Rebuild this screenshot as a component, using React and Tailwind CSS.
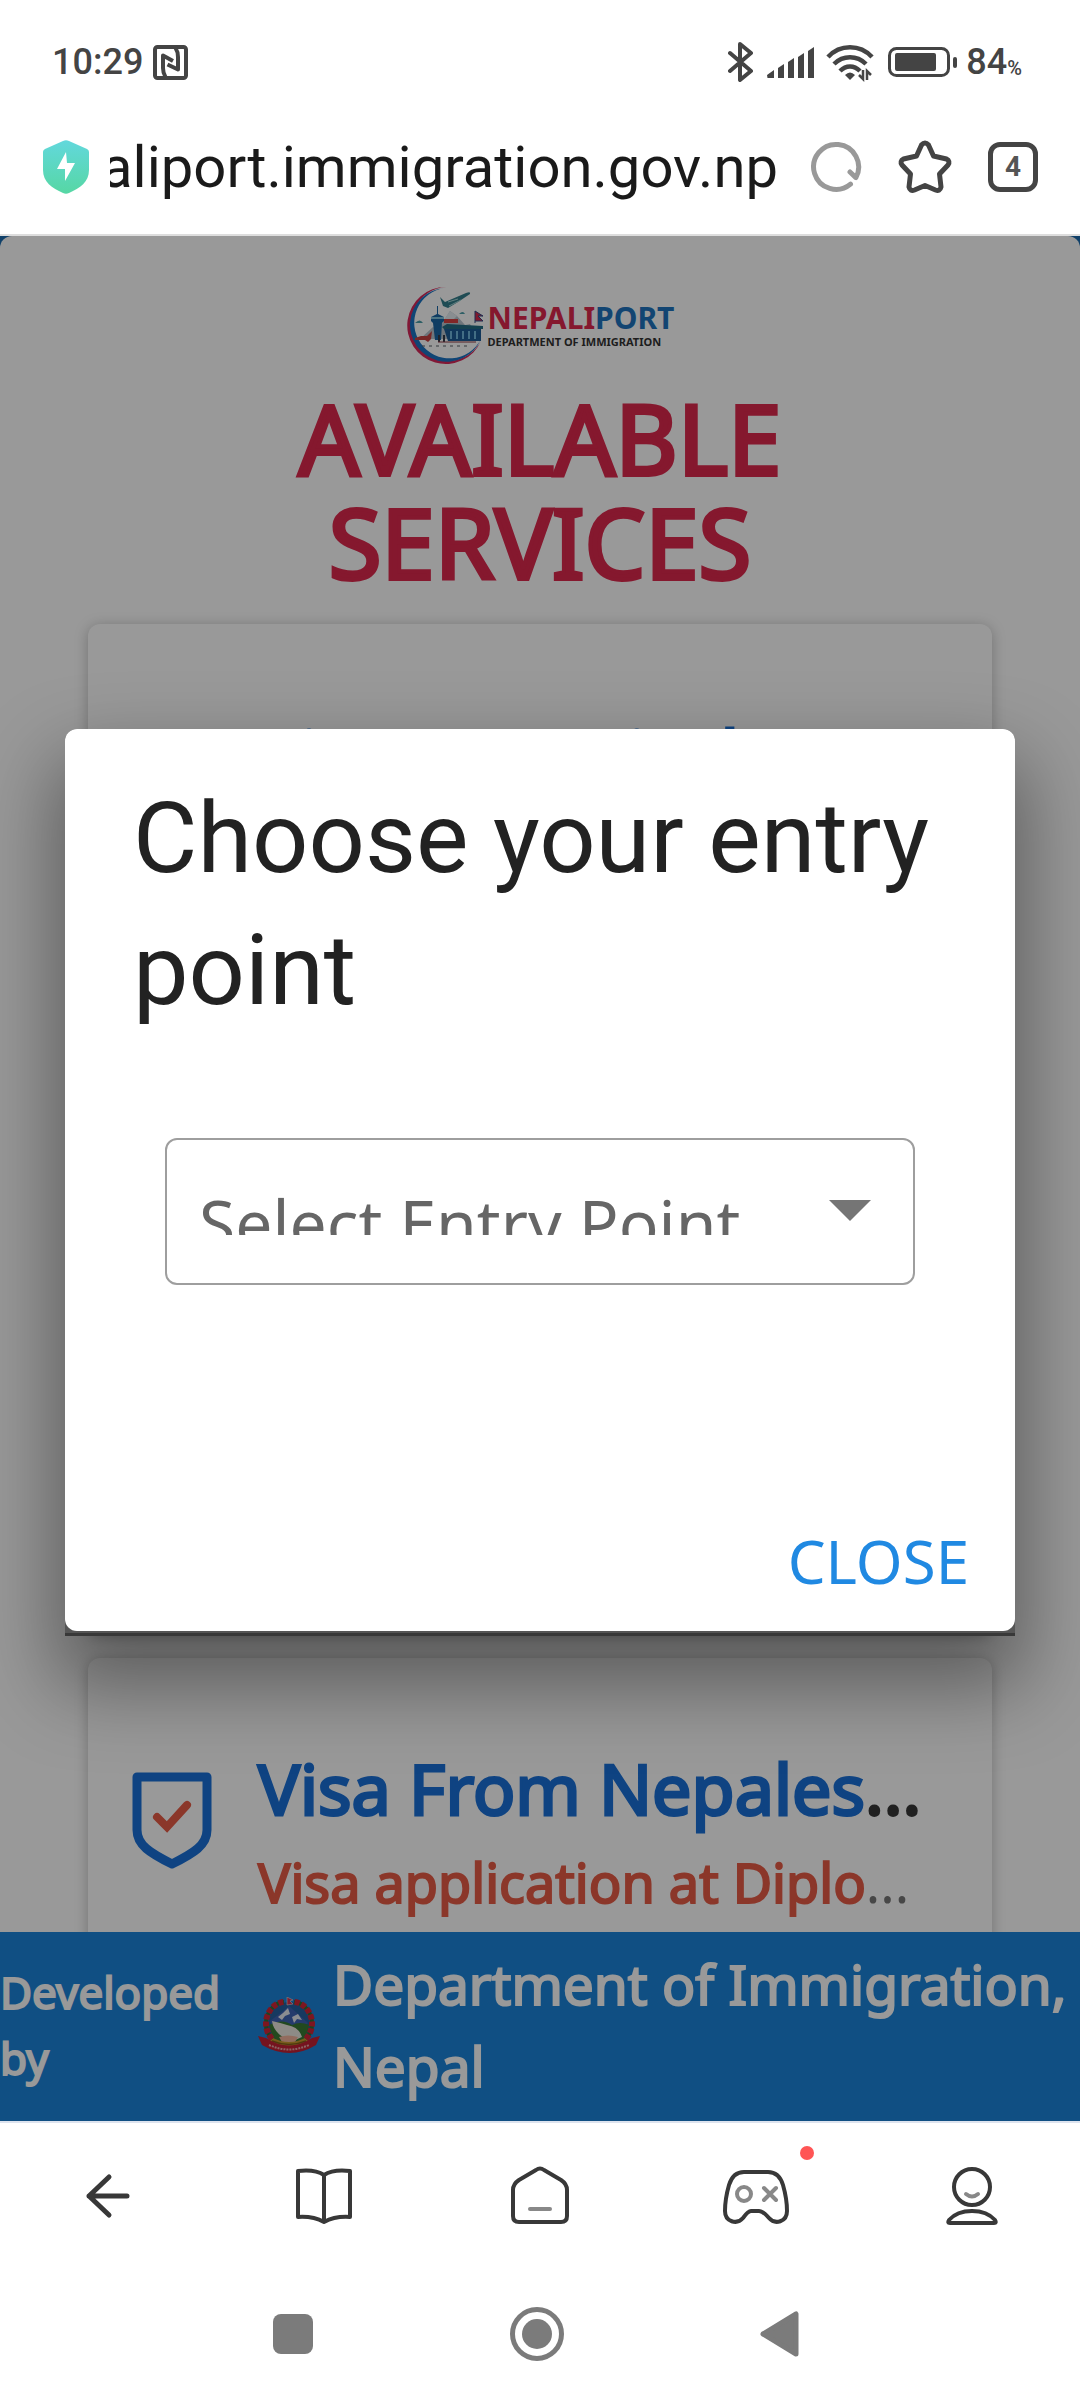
import { useState } from 'react';

const SERVICES = [
  { title: 'Visa On Arrival', subtitle: '', size: 'min-h-[1010px]' },
  { title: 'Visa From Nepales', subtitle: 'Visa application at Diplo', size: 'min-h-80' },
];

function StatusBar() {
  return (
    <div className="flex h-[124px] items-center justify-between pr-[58px] pl-[52px] font-['Roboto','Noto_Sans',sans-serif] text-4xl font-medium text-[#444]">
      <div className="flex items-center gap-2.5">
        <span>10:29</span>
        <svg className="h-[35px] w-[35px]" viewBox="0 0 35 35" fill="none" stroke="#444">
          <rect x="2" y="2" width="31" height="31" rx="2.5" strokeWidth="4" />
          <path d="M12.500 32c-2-3-2.500-6-2.500-9V10.500L20 16" strokeWidth="4" strokeLinejoin="round" />
          <path d="M22.500 3c2 3 2.500 6 2.500 9v12.500L14.500 19.500" strokeWidth="4" strokeLinejoin="round" />
        </svg>
      </div>
      <div className="flex items-center">
        <svg className="h-10 w-[230px]" viewBox="0 0 230 40" fill="none" stroke="#444">
          <path d="M2 11l21 18-11 9V2l11 9L2 29" strokeWidth="4" strokeLinejoin="round" strokeLinecap="round" />
          <g fill="#444" stroke="none">
            <path d="M39 33l7-5v8h-6.500zM50 26l6-4v14h-6zM60 20l6-4v20h-6zM70 15l6-4v25h-6zM80 9l6-4v31h-6z" />
          </g>
          <g strokeWidth="4.500">
            <path d="M100 15c12-13 32-13 44 0" />
            <path d="M106 22c9-9 23-9 32 0" />
            <path d="M112 29c6-6 14-6 20 0" />
          </g>
          <path d="M117 33q5-5 10 0l-5 5z" fill="#444" stroke="none" />
          <path d="M135 28v9l-4-4M139 38v-9l4 4" strokeWidth="2.500" />
          <rect x="161.500" y="6.500" width="59" height="27" rx="7" strokeWidth="3" />
          <rect x="167" y="11" width="41" height="18" rx="2" fill="#444" stroke="none" />
          <rect x="225" y="15" width="4" height="11" rx="2" fill="#444" stroke="none" />
        </svg>
        <span className="pl-2">84</span>
        <span className="self-end text-xl">%</span>
      </div>
    </div>
  );
}

function AddressBar() {
  return (
    <div className="flex h-[112px] items-center border-b-2 border-[#ddd] px-[42px] pb-6">
      <svg className="h-[54px] w-[48px] shrink-0" viewBox="0 0 48 54">
        <defs>
          <linearGradient id="guard" x1="0" y1="0" x2="0" y2="1">
            <stop offset="0" stopColor="#62d8dc" />
            <stop offset="1" stopColor="#56d7a4" />
          </linearGradient>
        </defs>
        <path d="M21 1q3-1.500 6 0l18 8q2 1 2 3v18c0 12-9 18-20 23q-3 1.500-6 0C10 48 1 42 1 30V12q0-2 2-3z" fill="url(#guard)" />
        <path d="M24 12L15 29h8v12l10-18h-8z" fill="#fff" />
      </svg>
      <div className="ml-5 flex min-w-0 flex-1 justify-end overflow-hidden">
        <span className="whitespace-nowrap font-['Roboto','Noto_Sans',sans-serif] text-[58px] leading-[72px] text-[#1a1a1a]">
          nepaliport.immigration.gov.np
        </span>
      </div>
      <div className="ml-8 flex shrink-0 items-center gap-9">
        <button aria-label="Reload">
          <svg className="h-[52px] w-[52px]" viewBox="0 0 52 52" fill="none" stroke="#999" strokeWidth="5" strokeLinecap="round" strokeLinejoin="round">
            <path d="M40.500 43.200A22.500 22.500 0 1 1 45.900 36.600L40 31" />
          </svg>
        </button>
        <button aria-label="Bookmark">
          <svg className="h-[54px] w-[54px]" viewBox="0 0 54 54" fill="none" stroke="#444" strokeWidth="5" strokeLinejoin="round">
            <path d="M23.500 5q3.500-4 7 0l5 11 13 3q4 2 1.500 6l-8.500 9 1.500 13q-1 4.500-5.500 3L27 45.500 16.500 50q-4.500 1.500-5.500-3l1.500-13L4 25q-2.500-4 1.500-6l13-3z" />
          </svg>
        </button>
        <button
          aria-label="Tabs"
          className="flex h-[50px] w-[50px] items-center justify-center rounded-xl border-[5px] border-[#444] font-['Roboto','Noto_Sans',sans-serif] text-[28px] font-bold text-[#555]"
        >
          4
        </button>
      </div>
    </div>
  );
}

function PortLogo() {
  return (
    <div className="flex items-center justify-center gap-1">
      <svg className="h-[78px] w-[78px]" viewBox="0 0 78 78">
        <path d="M40 0A38.500 38.500 0 1 0 75 54A36.900 36.900 0 1 1 40 0z" fill="#d8285a" />
        <path d="M39 1A36.900 36.900 0 1 0 75 52A35.300 35.300 0 1 1 39 1z" fill="#1b74c4" />
        <path d="M14 52l13-12 5 3 12-19 7 5 8 9 5-1 8 15z" fill="#b7c3cd" />
        <path d="M38 33l6-9 7 5-5 5z" fill="#e4ebf0" />
        <path d="M37 19l-3-9 5 5 21-9q5-2 4 1L52 15l-10 6z" fill="#357f8c" />
        <path d="M42 15l10-3M43 19l12-6" stroke="#a7d6d8" strokeWidth="1" />
        <path d="M25 30v4l2 2 2 17h6l1-17 2-2v-4l-6-3v-8h-1v8z" fill="#1c67a5" />
        <path d="M25 31h13" stroke="#83c4dd" strokeWidth="2" />
        <rect x="38" y="32" width="14" height="4" fill="#d84242" />
        <path d="M36 40l5-3 36 2v3H38z" fill="#246d84" />
        <path d="M38 42h37v12H42z" fill="#1d5d97" />
        <path d="M45 44v8M51 44v8M57 44v8M63 44v8M69 44v8" stroke="#71b8dd" strokeWidth="2" />
        <path d="M9 51l6-2h6l5-5-1 8-3 3-3-2H9z" fill="#c94141" />
        <path d="M33 48v7M38 48v7" stroke="#333d4c" strokeWidth="2" />
        <path d="M32 55h38" stroke="#8d3a45" />
        <path d="M16 59h46" stroke="#596066" strokeDasharray="3 4" />
        <path d="M69 24v12M69 24l8 5h-5l5 5h-8" fill="#d42b4d" stroke="#344a85" strokeWidth="1" />
        <path d="M9 36q5-5 8 0zM53 27q4-4 6 0z" fill="#4e9eaa" />
      </svg>
      <div className="font-['Noto_Sans',sans-serif] font-bold">
        <div className="text-[30px] leading-8">
          <span className="text-[#de284d]">NEPALI</span>
          <span className="text-[#1f73be]">PORT</span>
        </div>
        <div className="text-[11px] leading-4 text-[#333]">DEPARTMENT OF IMMIGRATION</div>
      </div>
    </div>
  );
}

function ServiceCard({ title, subtitle, size }) {
  return (
    <article className={`flex gap-[46px] rounded-xl bg-white px-11 pt-[84px] shadow-[0_2px_14px_rgba(0,0,0,0.25)] ${size}`}>
      <svg className="mt-[30px] h-[98px] w-[80px] shrink-0" viewBox="0 0 80 98" fill="none">
        <path d="M5 5h70v53c0 15-13 23-35 34C18 81 5 73 5 58z" stroke="#1971d9" strokeWidth="9" strokeLinejoin="round" />
        <path d="M25 45l10 10 20-22" stroke="#e85c46" strokeWidth="8" strokeLinecap="round" />
      </svg>
      <div className="min-w-0 whitespace-nowrap font-['Noto_Sans',sans-serif]">
        <h2 className="text-[70px] leading-[92px] text-[#383838] [-webkit-text-stroke:3px]">
          <span className="text-[#1971d9] [-webkit-text-stroke:3px_#1971d9]">{title}</span>
          {subtitle && '...'}
        </h2>
        {subtitle && (
          <p className="text-[54px] leading-[96px] text-[#777]">
            <span className="text-[#e85c46] [-webkit-text-stroke:2px_#e85c46]">{subtitle}</span>...
          </p>
        )}
      </div>
    </article>
  );
}

function Emblem() {
  return (
    <svg className="h-[56px] w-[64px] shrink-0" viewBox="0 0 64 56">
      <ellipse cx="32" cy="28" rx="21" ry="23" fill="#2560a0" />
      <path d="M13 24L25 15l7-6 8 7 11 10-8 8H18z" fill="#3e63b5" />
      <path d="M21 20l5-4 5-5 2 6-5 2-3 4zM35 20l6-3 4 6-5-1-3 4z" fill="#e6e9f2" />
      <path d="M12 28q14-7 23 0 8-4 17 0l-3 16H17z" fill="#3a7a35" />
      <path d="M15 24q9 2 15 4 12 2 15 12l-9 4q-8-2-13-6-7-6-8-14z" fill="#ece8df" />
      <path d="M22 40q9-3 19 0l-3 5H25z" fill="#f3b59d" />
      <path d="M14 40q18 10 36 0l2 9q-20 8-40 0z" fill="#c9982d" />
      <path d="M15 44q17 7 34 0" stroke="#83601a" strokeWidth="1.500" fill="none" />
      <path d="M15 42C2 27 12 6 27 5M49 42C62 27 52 6 37 5" stroke="#2f7036" strokeWidth="4" fill="none" />
      <path d="M15 42C2 27 12 6 27 5M49 42C62 27 52 6 37 5" stroke="#d12638" strokeWidth="6" strokeDasharray="5 2" fill="none" />
      <path d="M30 8V0l6 3-3 1 3 3z" fill="#d83050" stroke="#ddd" strokeWidth=".6" />
      <path d="M1 39l8 2q23 15 46 0l8-2-4 9q-26 16-54 0z" fill="#c32034" />
      <path d="M12 48q20 9 40 0" stroke="#e9a7a7" strokeWidth="2" strokeDasharray="2 1" fill="none" />
    </svg>
  );
}

function PageFooter() {
  return (
    <footer className="flex h-[189px] items-center bg-[#1b84da] pb-1 font-['Noto_Sans',sans-serif] text-white [-webkit-text-stroke:2px_white]">
      <span className="w-[257px] shrink-0 text-[44px] leading-[66px]">Developed<br />by</span>
      <Emblem />
      <span className="pl-3 text-[55px] leading-[82px]">Department of Immigration, Nepal</span>
    </footer>
  );
}

function EntryDialog({ onClose }) {
  return (
    <div className="absolute inset-0 flex items-center justify-center bg-black/40 px-[65px] pt-2">
      <div className="w-full rounded-t-xl border-b-[3px] border-[#383838] bg-[#555] pb-[2px] shadow-[0_40px_80px_10px_rgba(0,0,0,0.4)]">
        <div role="dialog" aria-labelledby="entry-title" className="flex h-[902px] flex-col rounded-xl bg-white">
          <h2 id="entry-title" className="px-[68px] pt-[43px] font-['Roboto','Noto_Sans',sans-serif] text-[99px] leading-[132px] text-[#222]">
            Choose your entry point
          </h2>
          <div className="relative mx-[100px] mt-[102px]">
            <select
              aria-label="Select Entry Point"
              className="block h-[147px] w-full appearance-none rounded-xl border-2 border-[#9e9e9e] bg-white text-transparent"
            />
            <div className="pointer-events-none absolute inset-0 flex items-start justify-between pr-11 pl-[34px]">
              <span className="mt-12 h-[49px] overflow-hidden font-['Noto_Sans',sans-serif] text-[66px] leading-[72px] text-[#666]">
                Select Entry Point
              </span>
              <svg className="mt-[62px] h-[21px] w-[42px]" viewBox="0 0 42 21">
                <path d="M0 0h42L21 21z" fill="#757575" />
              </svg>
            </div>
          </div>
          <div className="mt-auto flex justify-end px-[46px] pb-7">
            <button onClick={onClose} className="font-['Noto_Sans',sans-serif] text-[60px] leading-[84px] text-[#2089e2]">
              CLOSE
            </button>
          </div>
        </div>
      </div>
    </div>
  );
}

function BrowserNav() {
  const line = { fill: 'none', stroke: '#383838', strokeWidth: 4, strokeLinecap: 'round', strokeLinejoin: 'round' };
  return (
    <nav className="grid h-[148px] grid-cols-5 place-items-center border-t-2 border-[#dde3ee] font-sans">
      <button aria-label="Back">
        <svg className="h-16 w-16" viewBox="0 0 64 64" {...line} strokeWidth="5">
          <path d="M51 32H13M33 13L13 32l20 19" />
        </svg>
      </button>
      <button aria-label="Reading">
        <svg className="h-16 w-16" viewBox="0 0 64 64" {...line}>
          <path d="M32 11q-9-6-26-4v46q15-1 26 5zM32 11q9-6 26-4v46q-15-1-26 5z" />
        </svg>
      </button>
      <button aria-label="Home">
        <svg className="h-16 w-16" viewBox="0 0 64 64" {...line}>
          <path d="M28 6q4-3 8 0l17 10q6 4 6 10v26q0 6-6 6H11q-6 0-6-6V26q0-6 6-10z" />
          <path d="M22 45h20" stroke="#888" />
        </svg>
      </button>
      <button aria-label="Games" className="relative">
        <svg className="h-16 w-[68px]" viewBox="0 0 68 64" {...line}>
          <path d="M22 8h24q11 0 15 13 4 14 4 26c0 11-12 14-18 7q-6-7-10-7H29q-3 0-8 7C15 61 3 58 3 47q0-12 4-26Q11 8 22 8z" />
          <g stroke="#888" strokeWidth="4">
            <circle cx="22" cy="30" r="7" />
            <path d="M42 24l12 12M54 24L42 36" />
          </g>
        </svg>
        <span className="absolute -top-[18px] -right-6 h-3.5 w-3.5 rounded-full bg-[#ff5555]" />
      </button>
      <button aria-label="Profile">
        <svg className="h-16 w-16" viewBox="0 0 64 64" {...line}>
          <circle cx="32" cy="23" r="18" />
          <path d="M26 30q6 5 12 0" stroke="#888" />
          <path d="M10 59h44q3 0 1-3-8-9-23-9T9 56q-2 3 1 3z" />
        </svg>
      </button>
    </nav>
  );
}

function SystemNav() {
  return (
    <nav className="flex h-[131px] items-center justify-between pr-[280px] pb-0.5 pl-[273px]">
      <button aria-label="Recent apps" className="h-10 w-10 rounded-lg bg-[#7b7b7b]" />
      <button aria-label="Home screen" className="flex h-[54px] w-[54px] items-center justify-center rounded-full border-[5px] border-[#7b7b7b]">
        <span className="h-[30px] w-[30px] rounded-full bg-[#7b7b7b]" />
      </button>
      <button aria-label="System back">
        <svg className="h-[46px] w-10" viewBox="0 0 40 46">
          <path d="M36 3v40L3 23z" fill="#7b7b7b" stroke="#7b7b7b" strokeWidth="5" strokeLinejoin="round" />
        </svg>
      </button>
    </nav>
  );
}

export default function App() {
  const [open, setOpen] = useState(true);

  return (
    <div className="flex h-screen flex-col bg-white">
      <header>
        <StatusBar />
        <AddressBar />
      </header>
      <main className="relative flex min-h-0 flex-1 flex-col overflow-hidden bg-[#1b6cb0]">
        <div className="min-h-0 flex-1 overflow-hidden rounded-t-xl bg-white px-[88px] pt-[51px]">
          <PortLogo />
          <h1 className="mx-auto mt-[21px] w-min text-center font-['Noto_Sans',sans-serif] text-[96px] leading-[104px] text-[#de284d] [-webkit-text-stroke:4px_#de284d]">
            AVAILABLE SERVICES
          </h1>
          <div className="mt-[30px] flex flex-col gap-6">
            {SERVICES.map((service) => (
              <ServiceCard key={service.title} {...service} />
            ))}
          </div>
        </div>
        <PageFooter />
        {open && <EntryDialog onClose={() => setOpen(false)} />}
      </main>
      <BrowserNav />
      <SystemNav />
    </div>
  );
}
